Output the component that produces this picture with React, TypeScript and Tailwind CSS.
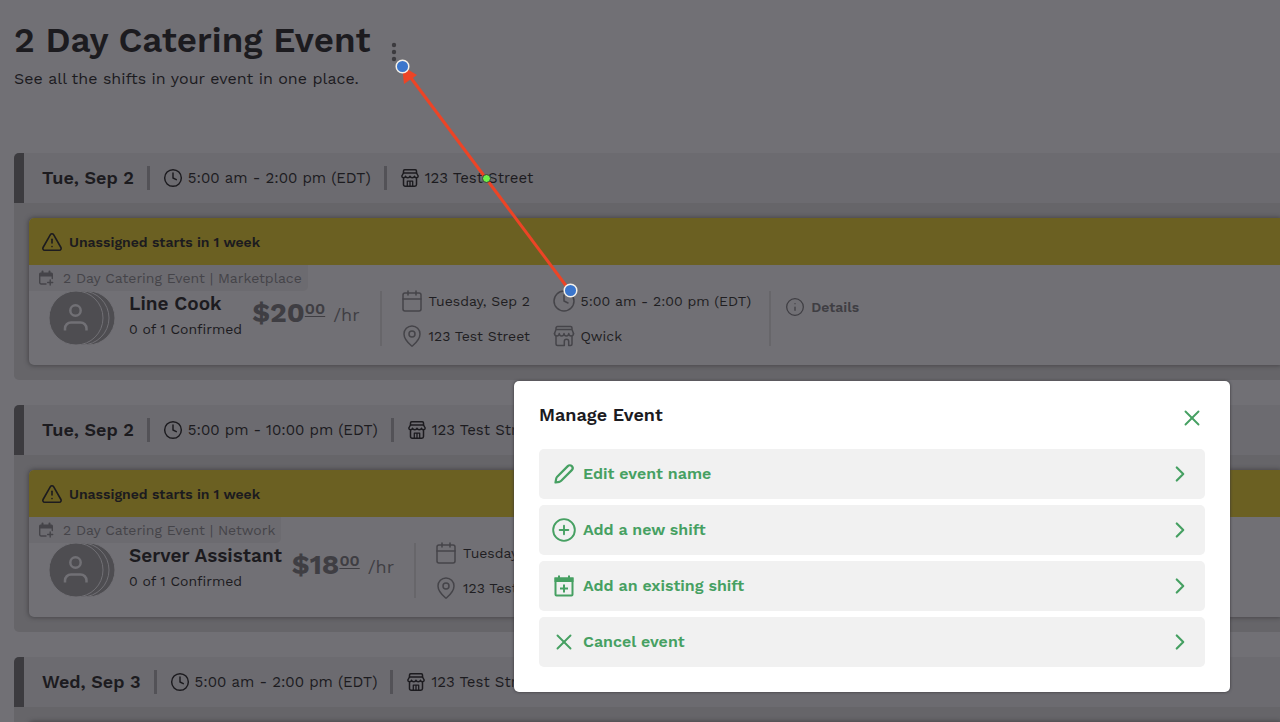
import type { ReactNode } from "react";
import { Calendar, ChevronRight, CirclePlus, Clock, Info, MapPin, TriangleAlert, X } from "lucide-react";

type Shift = {
  id: number;
  date: string;
  time: string;
  location: string;
  position?: { fullDate: string; source: string; role: string; dollars: string };
};

const shifts: Shift[] = [
  {
    id: 1,
    date: "Tue, Sep 2",
    time: "5:00 am - 2:00 pm (EDT)",
    location: "123 Test Street",
    position: { fullDate: "Tuesday, Sep 2", source: "Marketplace", role: "Line Cook", dollars: "$20" },
  },
  {
    id: 2,
    date: "Tue, Sep 2",
    time: "5:00 pm - 10:00 pm (EDT)",
    location: "123 Test Street",
    position: { fullDate: "Tuesday, Sep 2", source: "Network", role: "Server Assistant", dollars: "$18" },
  },
  { id: 3, date: "Wed, Sep 3", time: "5:00 am - 2:00 pm (EDT)", location: "123 Test Street" },
];

function StoreIcon() {
  return (
    <svg width="20" height="20" viewBox="0 0 20 20" fill="none" stroke="currentColor" strokeWidth="1.5" strokeLinejoin="round" strokeLinecap="round" aria-hidden="true">
      <path d="M3.500 5V3a1.200 1.200 0 0 1 1.200-1.200h10.600A1.200 1.200 0 0 1 16.500 3v2" />
      <path d="M3.500 5h13l1.700 3c0 2.300-3.400 2.300-3.700.3-.6 2-3.900 2-4.500 0-.6 2-3.900 2-4.500 0-.3 2-3.700 2-3.700-.3z" />
      <path d="M3.500 10.500v6a1.700 1.700 0 0 0 1.700 1.700h9.600a1.700 1.700 0 0 0 1.700-1.700v-6" />
      <path d="M7.300 18v-4.800h5.400V18M10 13.200V18" strokeWidth="1.300" />
    </svg>
  );
}

function ShopIcon() {
  return (
    <svg className="-my-0.5 shrink-0" width="24" height="24" viewBox="-1 -1 24 24" fill="none" stroke="currentColor" strokeWidth="1.500" strokeLinejoin="round" strokeLinecap="round" aria-hidden="true">
      <path d="M3 4.500V3a1.500 1.500 0 0 1 1.500-1.500h13A1.500 1.500 0 0 1 19 3v1.500M3 4.500h16M3 4.500 1.500 8.500M19 4.500l1.500 4" />
      <path d="M1.500 8.500c0 3.200 4.750 3.200 4.750 0 0 3.200 4.750 3.200 4.750 0 0 3.200 4.750 3.200 4.750 0 0 3.200 4.750 3.200 4.750 0" />
      <path d="M3 11.500V19a1.500 1.500 0 0 0 1.500 1.500h6.800V16.500a2.200 2.200 0 0 1 4.400 0v4h1.800A1.500 1.500 0 0 0 19 19v-7.500" />
    </svg>
  );
}

function CalendarAddIcon() {
  return (
    <svg width="16" height="16" viewBox="0 0 16 16" fill="none" stroke="currentColor" strokeWidth="1.400" strokeLinecap="round" aria-hidden="true">
      <path d="M4.500 1.500v2M11.500 1.500v2" strokeWidth="2" />
      <path d="M1 6.500V4a1.500 1.500 0 0 1 1.500-1.500h11A1.500 1.500 0 0 1 15 4v2.500z" fill="currentColor" stroke="none" />
      <path d="M1.700 6v6.500A1.500 1.500 0 0 0 3.200 14H8M14.300 6v2.500M12.200 10v5M9.700 12.500h5" />
    </svg>
  );
}

function CalendarPlusIcon() {
  return (
    <svg width="24" height="24" viewBox="0 0 24 24" fill="none" stroke="currentColor" strokeWidth="2" aria-hidden="true">
      <path d="M3.500 4.500h17v16a1 1 0 0 1-1 1h-15a1 1 0 0 1-1-1z" />
      <path d="M2.500 3.500h19V8h-19z" fill="currentColor" stroke="none" />
      <path d="M7 1.500v3M17 1.500v3M12 10.500v8M8 14.500h8" />
    </svg>
  );
}

function PencilIcon() {
  return (
    <svg width="24" height="24" viewBox="0 0 24 24" fill="none" stroke="currentColor" strokeWidth="2.200" strokeLinejoin="round" aria-hidden="true">
      <path d="M3.500 20.500 4.200 16.600a3.500 3.500 0 0 1 1-1.900L15.800 4.100a2.800 2.800 0 0 1 4 4L9.200 18.800a3.500 3.500 0 0 1-1.900 1z" />
    </svg>
  );
}

function Avatars() {
  return (
    <svg className="shrink-0" width="66" height="54" viewBox="0 0 66 54" fill="#4e4d51" stroke="#717075" strokeWidth="1" aria-hidden="true">
      <circle cx="39" cy="27" r="27" />
      <circle cx="33" cy="27" r="27" />
      <circle cx="27" cy="27" r="27" />
      <g fill="none" stroke="#717075" strokeWidth="2.500">
        <circle cx="26.500" cy="19.500" r="5.200" />
        <path d="M16 39.500v-2a6 6 0 0 1 6-6h9.500a6 6 0 0 1 6 6v2" />
      </g>
    </svg>
  );
}

function Divider() {
  return <span className="h-6 w-[3px] bg-[#535257]" />;
}

function Detail({ icon, children }: { icon: ReactNode; children: ReactNode }) {
  return (
    <div className="flex h-5 items-center gap-[5px] whitespace-nowrap text-[#454449]">
      {icon}
      <span className="text-sm text-[#1f1e22]">{children}</span>
    </div>
  );
}

function ShiftSection({ shift }: { shift: Shift }) {
  const { position } = shift;

  return (
    <section className="mb-[25px] overflow-hidden rounded-l-[5px] bg-[#666569] pb-[15px]">
      <div className="flex h-[50px] items-center gap-[13px] whitespace-nowrap border-l-10 border-[#3c3b3f] bg-[#6c6b70] pl-[18px] text-[15px] text-[#1c1b1f]">
        <h2 className="text-lg font-semibold">{shift.date}</h2>
        <Divider />
        <div className="flex items-center gap-[5px]">
          <Clock size={20} strokeWidth={1.75} />
          <span>{shift.time}</span>
        </div>
        <Divider />
        <div className="flex items-center gap-[5px]">
          <StoreIcon />
          <span>{shift.location}</span>
        </div>
      </div>

      <article className="mt-[15px] ml-[15px] min-h-[147px] rounded-l-[5px] bg-[#717075] shadow-[0_0_4px_1px_#49484c]">
        {position ? (
          <>
            <div className="flex h-[47px] items-center gap-1.5 rounded-tl-[5px] bg-[#6b6022] pl-3 text-[#1c1b1f]">
              <TriangleAlert size={22} strokeWidth={1.75} />
              <strong className="text-sm font-semibold">Unassigned starts in 1 week</strong>
            </div>
            <div className="flex h-[26px] w-fit items-center gap-[9px] rounded-br-[5px] bg-[#6c6b70] pr-1.5 pl-[9px] text-[#454449]">
              <CalendarAddIcon />
              <span className="text-sm">2 Day Catering Event | {position.source}</span>
            </div>
            <div className="flex h-[74px] pl-5">
              <Avatars />
              <div className="ml-3.5 whitespace-nowrap text-[#1c1b1f]">
                <h3 className="text-[19px] leading-[26px] font-semibold">{position.role}</h3>
                <p className="text-sm leading-6">0 of 1 Confirmed</p>
              </div>
              <p className="ml-2.5 flex h-11 items-center whitespace-nowrap text-[#3f3e43]">
                <span className="text-[28px] font-bold">{position.dollars}</span>
                <sup className="top-0 mb-2 text-base leading-4 font-semibold underline underline-offset-2">00</sup>
                <span className="ml-2 pt-1 text-lg">/hr</span>
              </p>
              <div className="ml-5 grid h-[55px] grid-cols-[130px_auto] content-between gap-x-[22px] border-x-2 border-[#67666a] px-[18px]">
                <Detail icon={<Calendar className="-my-0.5 shrink-0" size={24} strokeWidth={1.5} />}>{position.fullDate}</Detail>
                <Detail icon={<Clock className="-my-0.5 shrink-0" size={24} strokeWidth={1.5} />}>{shift.time}</Detail>
                <Detail icon={<MapPin className="-my-0.5 shrink-0" size={24} strokeWidth={1.5} />}>{shift.location}</Detail>
                <Detail icon={<ShopIcon />}>Qwick</Detail>
              </div>
              <button type="button" className="ml-3.5 flex h-8 items-center gap-1.5 text-sm font-semibold text-[#3f3e43]">
                <Info size={20} strokeWidth={1.5} />
                Details
              </button>
            </div>
          </>
        ) : null}
      </article>
    </section>
  );
}

const actions = [
  { label: "Edit event name", icon: <PencilIcon /> },
  { label: "Add a new shift", icon: <CirclePlus size={26} strokeWidth={1.75} /> },
  { label: "Add an existing shift", icon: <CalendarPlusIcon /> },
  { label: "Cancel event", icon: <X size={26} strokeWidth={1.75} /> },
];

function ManageEventDialog() {
  return (
    <div role="dialog" aria-labelledby="manage-event" className="absolute right-[50px] bottom-[30px] w-[716px] rounded-[5px] bg-white px-[25px] pt-5 pb-[25px] shadow-[0_0_3px_#333237]">
      <div className="mb-3.5 flex h-[34px] items-center justify-between">
        <h2 id="manage-event" className="pb-1.5 text-lg font-semibold text-[#1c1b1f]">Manage Event</h2>
        <button type="button" aria-label="Close" className="text-[#46a062]">
          <X size={26} strokeWidth={1.75} />
        </button>
      </div>
      <ul className="flex flex-col gap-1.5">
        {actions.map((action) => (
          <li key={action.label}>
            <button type="button" className="flex h-[50px] w-full items-center gap-1.5 rounded-[5px] bg-[#f1f1f1] px-3 text-base font-semibold text-[#46a062]">
              <span className="flex w-[26px] justify-center">{action.icon}</span>
              {action.label}
              <ChevronRight className="ml-auto" size={26} strokeWidth={2} />
            </button>
          </li>
        ))}
      </ul>
    </div>
  );
}

// Annotation arrow drawn over the page, with its drag handles
function PointerArrow() {
  return (
    <svg className="pointer-events-none absolute top-0 left-0" width="600" height="320" viewBox="0 0 600 320" aria-hidden="true">
      <path d="M570 291 408 74" stroke="#ec4426" strokeWidth="3" />
      <path d="M402 66 417 75 404 84z" fill="#ec4426" />
      <circle cx="402.500" cy="66.500" r="6.300" fill="#3b76cc" stroke="#f4f1ea" strokeWidth="1.500" />
      <circle cx="570.500" cy="290.500" r="6.300" fill="#3b76cc" stroke="#f4f1ea" strokeWidth="1.500" />
      <circle cx="486.500" cy="178.500" r="4" fill="#6df048" stroke="#3c3b3f" strokeWidth="1" />
    </svg>
  );
}

export default function App() {
  return (
    <div className="relative h-screen overflow-hidden bg-[#717075] font-['Work_Sans','Inter',sans-serif]">
      <main className="pt-[18px] pl-3.5">
        <header className="mb-[62px] text-[#1c1b1f]">
          <div className="flex gap-5">
            <h1 className="text-[35px] leading-[44px] font-semibold">2 Day Catering Event</h1>
            <button type="button" aria-label="Event options" className="self-end">
              <svg width="6" height="20" viewBox="0 0 6 20" fill="#3c3b3f" aria-hidden="true">
                <circle cx="3" cy="3" r="2.200" />
                <circle cx="3" cy="10" r="2.200" />
                <circle cx="3" cy="17" r="2.200" />
              </svg>
            </button>
          </div>
          <p className="mt-[5px] text-base">See all the shifts in your event in one place.</p>
        </header>
        {shifts.map((shift) => (
          <ShiftSection key={shift.id} shift={shift} />
        ))}
      </main>
      <ManageEventDialog />
      <PointerArrow />
    </div>
  );
}
